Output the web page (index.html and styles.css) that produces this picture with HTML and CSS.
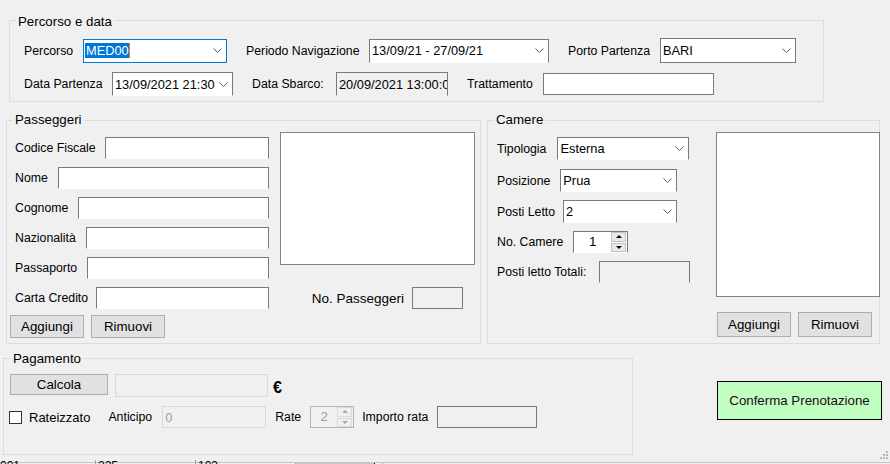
FILE: index.html
```html
<!DOCTYPE html>
<html lang="it">
<head>
<meta charset="utf-8">
<title>Prenotazione Crociera</title>
<link rel="stylesheet" href="styles.css">
</head>
<body>
<div class="form">

  <section class="group g-route">
    <h2 class="gtitle">Percorso e data</h2>
    <div class="route-row r1">
      <label class="lbl">Percorso</label>
      <div class="combo focus"><span class="val sel">MED00</span><svg class="chev" width="9" height="5" viewBox="0 0 9 5"><path d="M0.5 0.5 L4.5 4.5 L8.5 0.5"/></svg></div>
      <label class="lbl sp">Periodo Navigazione</label>
      <div class="combo open"><span class="val">13/09/21 - 27/09/21</span><svg class="chev" width="9" height="5" viewBox="0 0 9 5"><path d="M0.5 0.5 L4.5 4.5 L8.5 0.5"/></svg></div>
      <label class="lbl sp">Porto Partenza</label>
      <div class="combo tall"><span class="val">BARI</span><svg class="chev" width="9" height="5" viewBox="0 0 9 5"><path d="M0.5 0.5 L4.5 4.5 L8.5 0.5"/></svg></div>
    </div>
    <div class="route-row r2">
      <label class="lbl">Data Partenza</label>
      <div class="combo open"><span class="val">13/09/2021 21:30</span><svg class="chev" width="9" height="5" viewBox="0 0 9 5"><path d="M0.5 0.5 L4.5 4.5 L8.5 0.5"/></svg></div>
      <label class="lbl sp">Data Sbarco:</label>
      <div class="tb ro open h24">20/09/2021 13:00:00</div>
      <label class="lbl sp">Trattamento</label>
      <div class="tb"></div>
    </div>
  </section>

  <div class="mid">
    <section class="group g-pass">
      <h2 class="gtitle">Passeggeri</h2>
      <div class="pass-grid">
        <div class="field f-cf"><label class="lbl">Codice Fiscale</label><div class="tb open"></div></div>
        <div class="field"><label class="lbl">Nome</label><div class="tb open"></div></div>
        <div class="field"><label class="lbl">Cognome</label><div class="tb open"></div></div>
        <div class="field"><label class="lbl">Nazionalità</label><div class="tb open"></div></div>
        <div class="field"><label class="lbl">Passaporto</label><div class="tb open"></div></div>
        <div class="field f-cc"><label class="lbl">Carta Credito</label><div class="tb open"></div></div>
        <div class="list pass-list"></div>
        <div class="npass"><label class="lbl lg">No. Passeggeri</label><div class="tb ro npass-box"></div></div>
      </div>
      <div class="btn-row pass-btns">
        <button class="btn">Aggiungi</button>
        <button class="btn">Rimuovi</button>
      </div>
    </section>

    <section class="group g-cam">
      <h2 class="gtitle">Camere</h2>
      <div class="cam-body">
        <div class="cam-fields">
          <div class="field f-tip"><label class="lbl">Tipologia</label><div class="combo open c-tip"><span class="val">Esterna</span><svg class="chev" width="9" height="5" viewBox="0 0 9 5"><path d="M0.5 0.5 L4.5 4.5 L8.5 0.5"/></svg></div></div>
          <div class="field"><label class="lbl">Posizione</label><div class="combo open c-pos"><span class="val">Prua</span><svg class="chev" width="9" height="5" viewBox="0 0 9 5"><path d="M0.5 0.5 L4.5 4.5 L8.5 0.5"/></svg></div></div>
          <div class="field"><label class="lbl">Posti Letto</label><div class="combo open c-letto"><span class="val">2</span><svg class="chev" width="9" height="5" viewBox="0 0 9 5"><path d="M0.5 0.5 L4.5 4.5 L8.5 0.5"/></svg></div></div>
          <div class="field"><label class="lbl">No. Camere</label>
            <div class="nud open c-num"><span class="nud-val">1</span><span class="spin"><span class="sb up"></span><span class="sb down"></span></span></div>
          </div>
          <div class="field"><label class="lbl">Posti letto Totali:</label><div class="tb ro open c-tot"></div></div>
        </div>
        <div class="cam-side">
          <div class="list cam-list"></div>
          <div class="btn-row cam-btns">
            <button class="btn tall-btn">Aggiungi</button>
            <button class="btn tall-btn">Rimuovi</button>
          </div>
        </div>
      </div>
    </section>
  </div>

  <div class="bottom">
    <section class="group g-pay">
      <h2 class="gtitle">Pagamento</h2>
      <div class="pay-row p1">
        <button class="btn calc">Calcola</button>
        <div class="tb dis total"></div>
        <span class="euro">€</span>
      </div>
      <div class="pay-row p2">
        <span class="chk"></span>
        <label class="lbl chk-lbl">Rateizzato</label>
        <label class="lbl l-anticipo">Anticipo</label>
        <div class="tb dis anticipo">0</div>
        <label class="lbl l-rate">Rate</label>
        <div class="nud dis rate"><span class="nud-val">2</span><span class="spin"><span class="sb up"></span><span class="sb down"></span></span></div>
        <label class="lbl l-importo">Importo rata</label>
        <div class="tb ro importo"></div>
      </div>
    </section>
    <button class="confirm">Conferma Prenotazione</button>
  </div>

  <div class="status">
    <span class="seg s1">001</span>
    <span class="seg s2">225</span>
    <span class="seg s3">103</span>
    <span class="seg s4"></span>
    <span class="seg s5"></span>
  </div>

  <svg class="grip" width="9" height="9" viewBox="0 0 9 9">
    <rect x="6" y="0" width="2" height="2"/>
    <rect x="3" y="3" width="2" height="2"/>
    <rect x="6" y="3" width="2" height="2"/>
    <rect x="0" y="6" width="2" height="2"/>
    <rect x="3" y="6" width="2" height="2"/>
    <rect x="6" y="6" width="2" height="2"/>
  </svg>
</div>
</body>
</html>
```

FILE: styles.css
```css
* { box-sizing: border-box; }

html, body {
  margin: 0;
  padding: 0;
  background: #f0f0f0;
  overflow: hidden;
}

body {
  font-family: "Liberation Sans", Arial, sans-serif;
  font-size: 12px;
  color: #000;
}

.form {
  position: relative;
  width: 890px;
  height: 464px;
  overflow: hidden;
}

/* ---------- group boxes ---------- */
.group {
  position: relative;
  border: 1px solid #dcdcdc;
}

.gtitle {
  position: absolute;
  left: 6px;
  top: -8px;
  margin: 0;
  padding: 0 2px;
  font-size: 13.3px;
  font-weight: normal;
  line-height: 16px;
  background: #f0f0f0;
  white-space: nowrap;
}

.g-route .gtitle { top: -7px; }
.g-pass .gtitle, .g-cam .gtitle { top: -9px; }
.g-pay .gtitle { left: 7px; }

/* ---------- basic controls ---------- */
.lbl {
  font-size: 12.3px;
  white-space: nowrap;
}

.lbl.lg { font-size: 13.5px; }

.tb {
  display: flex;
  align-items: center;
  height: 22px;
  padding-left: 2px;
  background: #fff;
  border: 1px solid #7a7a7a;
  font-size: 12.8px;
  white-space: nowrap;
  overflow: hidden;
}

.tb.ro { background: #f0f0f0; }

.tb.dis {
  background: #f0f0f0;
  border-color: #d9d9d9;
  color: #a0a0a0;
}

.open { border-bottom-color: transparent !important; }

.h24 { height: 24px; }

.combo {
  display: flex;
  align-items: center;
  height: 24px;
  padding-left: 2px;
  background: #fff;
  border: 1px solid #7a7a7a;
  font-size: 12.8px;
  white-space: nowrap;
  overflow: hidden;
}

.combo .val {
  flex: 0 1 auto;
  min-width: 0;
  overflow: hidden;
}

.combo.tall { height: 25px; }

.combo.focus { border-color: #0078d7; }

.chev {
  flex: none;
  margin-left: auto;
  margin-right: 4px;
  fill: none;
  stroke: #606060;
  stroke-width: 1;
}

.sel {
  margin-left: -1px;
  padding: 0 0 0 1px;
  line-height: 15px;
  background: #0078d7;
  color: #fff;
  border-right: 1px solid #e87a2a;
}

.list {
  background: #fff;
  border: 1px solid #828282;
}

.btn {
  width: 74px;
  height: 23px;
  margin: 0;
  padding: 0;
  background: #e1e1e1;
  border: 1px solid #adadad;
  font-family: "Liberation Sans", Arial, sans-serif;
  font-size: 13.3px;
  color: #000;
}

.btn-row { display: flex; }

/* numeric up-down */
.nud {
  display: flex;
  height: 22px;
  background: #fff;
  border: 1px solid #7a7a7a;
  font-size: 13.3px;
}

.nud-val {
  flex: 1;
  text-align: center;
  line-height: 20px;
  color: #000;
}

.spin {
  display: flex;
  flex-direction: column;
  gap: 1px;
  width: 15px;
  margin: 0 1px 0 0;
}

.sb {
  flex: 1;
  display: flex;
  align-items: center;
  justify-content: center;
  background: #e9e9e9;
  border: 1px solid #c2c2c2;
}

.sb.up::after {
  content: "";
  border-left: 3px solid transparent;
  border-right: 3px solid transparent;
  border-bottom: 3px solid #000;
}

.sb.down::after {
  content: "";
  border-left: 3px solid transparent;
  border-right: 3px solid transparent;
  border-top: 3px solid #000;
}

.nud.dis {
  background: #f0f0f0;
  border-color: #b5b5b5;
}

.nud.dis .nud-val { color: #a0a0a0; }
.nud.dis .sb { background: #f0f0f0; border-color: #dadada; }
.nud.dis .sb.up::after { border-bottom-color: #a8a8a8; }
.nud.dis .sb.down::after { border-top-color: #a8a8a8; }

/* ---------- Percorso e data ---------- */
.g-route {
  width: 815px;
  height: 82px;
  margin: 20px 0 0 9px;
}

.route-row {
  display: grid;
  align-items: center;
  padding-left: 14px;
}

.route-row .sp { padding-left: 19px; }

.r1 {
  margin-top: 17px;
  grid-template-columns: 59px 144px 142px 180px 111px 136px;
}

.r2 {
  margin-top: 9px;
  grid-template-columns: 88px 121px 103px 112px 95px 171px;
}

/* ---------- middle ---------- */
.mid {
  display: flex;
  margin-top: 18px;
}

.g-pass {
  width: 475px;
  height: 224px;
  margin-left: 6px;
}

.pass-grid {
  display: grid;
  grid-template-columns: 254px 195px;
  grid-template-rows: repeat(6, 22px);
  row-gap: 8px;
  column-gap: 11px;
  margin: 16px 0 0 8px;
}

.field {
  display: flex;
  align-items: center;
}

.pass-grid .field { grid-column: 1; }

.pass-grid .field .tb {
  flex: 1;
  margin-left: 10px;
}

.pass-grid .f-cf .tb { margin-left: 9px; }
.pass-grid .f-cc .tb { margin-left: 8px; }

.pass-list {
  grid-column: 2;
  grid-row: 1 / 6;
  align-self: start;
  height: 133px;
  margin-top: -5px;
}

.npass {
  grid-column: 2;
  grid-row: 6;
  display: flex;
  align-items: center;
  justify-content: flex-end;
  padding-right: 12px;
}

.npass-box {
  width: 51px;
  margin-left: 8px;
}

.pass-btns {
  gap: 7px;
  margin: 6px 0 0 3px;
}

.g-cam {
  width: 393px;
  height: 224px;
  margin-left: 6px;
}

.cam-body {
  display: flex;
  justify-content: space-between;
  padding-top: 11px;
}

.cam-fields {
  display: flex;
  flex-direction: column;
  gap: 8px;
  margin: 5px 0 0 9px;
}

.cam-fields .f-tip { margin-bottom: 1px; }

.cam-fields .combo,
.cam-fields .nud,
.cam-fields .tb { margin-left: 10px; }

.cam-fields .c-tip { width: 132px; height: 23px; margin-left: 11px; }
.cam-fields .c-pos { width: 117px; height: 23px; }
.cam-fields .c-letto { width: 114px; height: 23px; margin-left: 8px; }
.c-num { width: 55px; }
.cam-fields .c-tot { width: 91px; margin-left: 13px; }

.cam-side {
  width: 164px;
  margin-right: -1px;
}

.cam-list { height: 165px; }

.cam-btns {
  gap: 7px;
  margin: 15px 0 0 1px;
}

.tall-btn { height: 25px; }

/* ---------- bottom ---------- */
.bottom {
  display: flex;
  align-items: flex-start;
  margin-top: 14px;
}

.g-pay {
  width: 630px;
  height: 97px;
  margin-left: 3px;
}

.pay-row { display: flex; }

.p1 {
  align-items: flex-start;
  margin: 15px 0 0 6px;
}

.calc {
  width: 98px;
  height: 21px;
}

.total {
  width: 153px;
  height: 23px;
  margin-left: 7px;
}

.euro {
  margin: 6px 0 0 5px;
  font-size: 16px;
  font-weight: bold;
  line-height: 16px;
}

.p2 {
  align-items: center;
  height: 22px;
  margin: 9px 0 0 5px;
}

.chk {
  width: 13px;
  height: 13px;
  background: #fff;
  border: 1px solid #333;
}

.chk-lbl {
  margin-left: 7px;
  font-size: 13px;
}

.l-anticipo { margin-left: 18px; }

.anticipo {
  width: 104px;
  margin-left: 10px;
}

.l-rate { margin-left: 9px; }

.rate {
  width: 44px;
  margin-left: 9px;
}

.l-importo { margin-left: 8px; }

.importo {
  width: 100px;
  margin-left: 9px;
}

.confirm {
  width: 165px;
  height: 39px;
  margin: 23px 8px 0 auto;
  padding: 0;
  background: #c0ffc0;
  border: 1px solid #000;
  font-family: "Liberation Sans", Arial, sans-serif;
  font-size: 13.3px;
  color: #1a0a1a;
}

/* ---------- status strip ---------- */
.status {
  display: flex;
  height: 12px;
  margin-top: 7px;
  border-top: 1px solid #c4c4c4;
  font-size: 12px;
  line-height: 12px;
}

.seg {
  margin-top: -3px;
  white-space: nowrap;
}

.s1 { width: 95px; padding-left: 0; }
.s2, .s3 { width: 100px; padding-left: 2px; border-left: 1px solid #a0a0a0; }
.s4 { width: 80px; margin-top: 0; background: #c8c8c8; border-left: 1px solid #a0a0a0; border-right: 1px solid #000; }
.s5 { flex: 1; margin-top: 0; margin-left: 7px; border-left: 1px solid #a0a0a0; }

.grip {
  position: absolute;
  left: 880px;
  top: 451px;
  fill: #b8b8b8;
}
```
